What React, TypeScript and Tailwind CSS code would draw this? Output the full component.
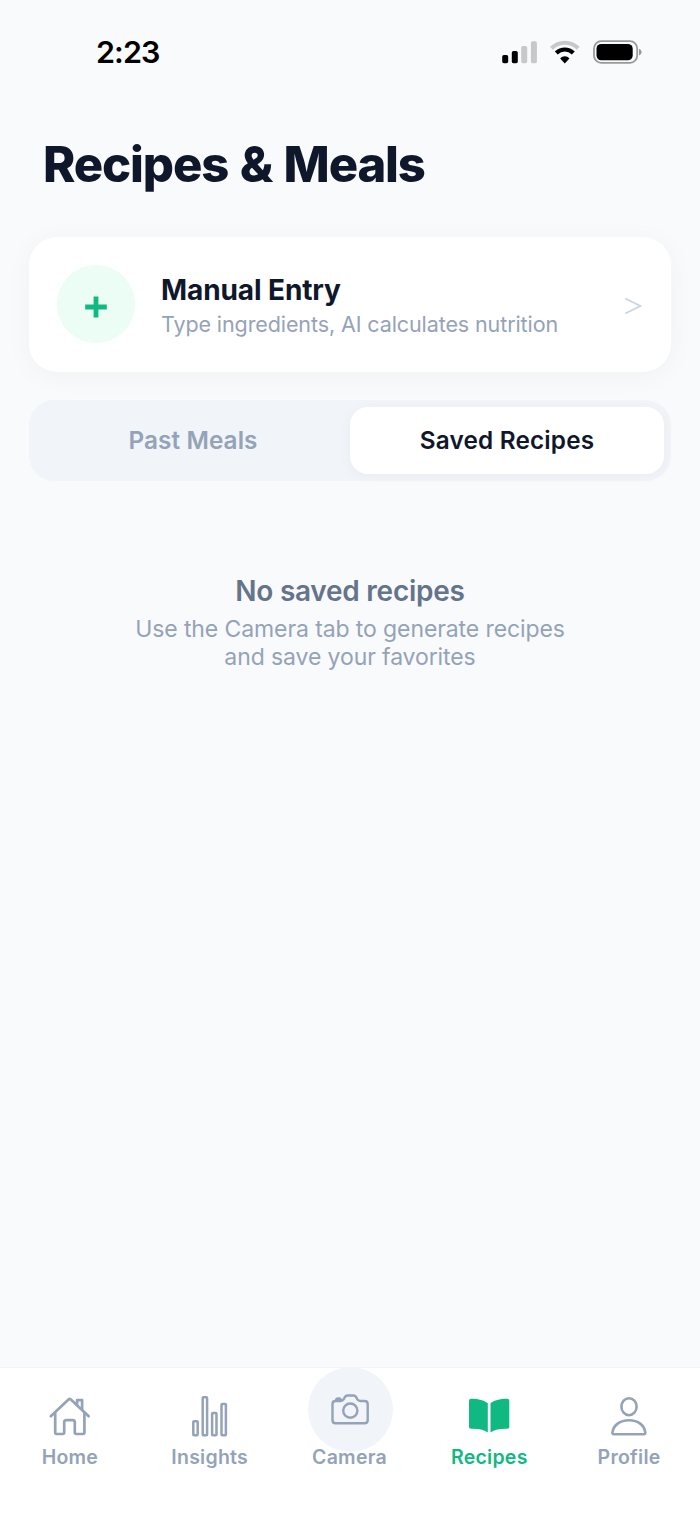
import type { ReactNode } from 'react'

const HomeIcon = () => (
  <svg width="48" height="48" viewBox="0 0 48 48" fill="none" stroke="currentColor" strokeWidth="2.7" strokeLinecap="round" strokeLinejoin="round">
    <path d="M4.8 25.2 22.8 8.3q.9-.8 1.8 0L42.7 25.2" />
    <path d="M9.2 22v19.6q0 1.4 1.4 1.4h6.2q1.4 0 1.4-1.4V31.4q0-2.2 2.2-2.2h6.2q2.2 0 2.2 2.2v10.2q0 1.4 1.4 1.4h6.8q1.4 0 1.4-1.4V22" />
    <path d="M31.1 13.8V9.1h5v9.4" />
  </svg>
)

const InsightsIcon = () => (
  <svg width="48" height="48" viewBox="0 0 48 48" fill="none" stroke="currentColor" strokeWidth="2.5">
    <rect x="7.3" y="30.3" width="4.4" height="14" rx="0.8" />
    <rect x="16.7" y="6.2" width="4.4" height="38.1" rx="0.8" />
    <rect x="26.1" y="22.1" width="4.4" height="22.2" rx="0.8" />
    <rect x="35.5" y="12.9" width="4.4" height="31.4" rx="0.8" />
  </svg>
)

const CameraIcon = () => (
  <svg width="48" height="48" viewBox="0 0 48 48" fill="none" stroke="currentColor" strokeWidth="2.4" strokeLinejoin="round">
    <path d="M9.5 15h5.2c1.5 0 2.2-.5 2.9-1.6l1.4-2.5c.6-1 1.3-1.4 2.4-1.4h6.2c1.1 0 1.8.4 2.4 1.4l1.4 2.5c.7 1.1 1.4 1.6 2.9 1.6h4.2q3.2 0 3.2 3.2v16q0 3-3.2 3h-29q-3 0-3-3v-16Q6.5 15 9.5 15Z" />
    <circle cx="24.3" cy="24.6" r="7.1" />
    <path d="M10 14.5q.2-2 2-2h1.100q1.600 0 1.900 2Z" fill="currentColor" />
  </svg>
)

const RecipesIcon = () => (
  <svg width="48" height="48" viewBox="0 0 48 48" fill="currentColor">
    <path d="M22.8 12.2C19 9.2 12.7 7.6 6 7.8Q4 7.9 4 9.9V35.7Q4 37.8 6 37.8C13 37.6 18.5 38.5 22.8 41.6Z" />
    <path d="M25.5 12.2C29.4 9.2 35.9 7.6 42.4 7.8Q44.3 7.9 44.3 9.9V35.7Q44.3 37.8 42.4 37.8C35.4 37.6 29.9 38.5 25.5 41.6Z" />
  </svg>
)

const ProfileIcon = () => (
  <svg width="48" height="48" viewBox="0 0 48 48" fill="none" stroke="currentColor" strokeWidth="2.6">
    <ellipse cx="24" cy="15.7" rx="7.6" ry="8.5" />
    <path d="M9 43.2q-1.7 0-1.6-1.6C8.2 34.2 15 29.2 24 29.2s15.5 5 16.3 12.4q.1 1.6-1.6 1.6Z" />
  </svg>
)

const StatusBar = () => (
  <div className="flex h-[104px] items-center justify-between pl-24 pr-[58px]">
    <span className="text-[30.5px] font-semibold leading-none tracking-[-0.9px] text-black">2:23</span>
    <div className="flex items-center">
      <svg width="36" height="24" viewBox="0 0 36 24">
        <rect x="0.2" y="15" width="6" height="8.2" rx="1.7" />
        <rect x="9.8" y="11" width="6" height="12.2" rx="1.7" />
        <rect x="19.2" y="6" width="6" height="17.2" rx="1.7" fill="#c7c8ca" />
        <rect x="28.9" y="1.2" width="6" height="22" rx="1.7" fill="#c7c8ca" />
      </svg>
      <svg className="ml-3" width="30" height="24" viewBox="0 0 30 24" fill="none" strokeWidth="4.2">
        <path d="M1.4 8.2C9.1.9 20.5.9 28.2 8.2" stroke="#c7c8ca" />
        <path d="M6.3 13c4.900-4.700 12.100-4.700 17 0" stroke="#000" />
        <path d="M14.8 23.6 10.2 18.6c2.500-3.100 6.700-3.100 9.200 0Z" fill="#000" />
      </svg>
      <svg className="ml-[13px]" width="49" height="24" viewBox="0 0 49 24">
        <rect x="1" y="1.2" width="43.2" height="21.6" rx="7.2" fill="none" stroke="#98999b" strokeWidth="1.8" />
        <rect x="3.5" y="3.9" width="36.2" height="16.4" rx="4.8" />
        <path d="M46 8.8q2.600 1 2.600 3.400T46 15.600Z" fill="#98999b" />
      </svg>
    </div>
  </div>
)

const NavItem = ({ label, icon, active = false }: { label: string; icon: ReactNode; active?: boolean }) => (
  <div className={active ? 'flex w-[139.8px] flex-col items-center text-[#10b981]' : 'flex w-[139.8px] flex-col items-center text-[#94a3b8]'}>
    <div className="mt-[23px] h-[54px]">{icon}</div>
    <span className="text-[19.5px] font-semibold leading-6 tracking-[0.25px]">{label}</span>
  </div>
)

const App = () => {
  return (
    <div className="flex h-[1518px] w-[700px] flex-col overflow-hidden bg-[#f9fafc] font-['Inter',sans-serif]">
      <StatusBar />

      <h1 className="ml-[43px] mt-[31px] h-[102px] text-[49px] font-extrabold leading-[60px] tracking-[-1.15px] text-[#0f172a] [word-spacing:2px]">
        Recipes &amp; Meals
      </h1>

      {/* Manual entry */}
      <div className="mx-[29px] flex h-[135px] items-center rounded-[28px] bg-white px-7 shadow-[0_4px_28px_rgba(0,0,0,0.04)]">
        <div className="mb-px flex size-[78px] items-center justify-center rounded-full bg-[#ecfdf5]">
          <svg className="mt-1.5" width="22" height="22" viewBox="0 0 22 22" fill="none" stroke="#10b981" strokeWidth="4.8">
            <path d="M11 .5v21M.2 11h21.6" />
          </svg>
        </div>
        <div className="ml-[26px] mt-[5px]">
          <div className="text-[28px] font-bold leading-[34px] tracking-[-0.1px] text-[#0f172a]">Manual Entry</div>
          <div className="text-[21.5px] leading-[34px] tracking-[-0.1px] text-[#94a3b8]">Type ingredients, AI calculates nutrition</div>
        </div>
        <svg className="ml-auto mt-[3px]" width="20" height="18" viewBox="0 0 20 18" fill="none" stroke="#cbd5e1" strokeWidth="1.8">
          <path d="M2.2 1.5 17.4 9 2.2 16.5" />
        </svg>
      </div>

      {/* Tabs */}
      <div className="mx-[29px] mt-7 flex h-[81px] rounded-[25px] bg-[#f1f4f9] p-[7px]">
        <div className="flex flex-1 items-center justify-center text-[24.3px] font-semibold tracking-[0.1px] text-[#94a3b8]">Past Meals</div>
        <div className="flex flex-1 items-center justify-center rounded-[18px] bg-white text-[24.3px] font-semibold tracking-[0.2px] text-[#0f172a] shadow-[0_2px_14px_rgba(0,0,0,0.04)]">
          Saved Recipes
        </div>
      </div>

      {/* Empty state */}
      <div className="mt-[93px] flex-1 text-center">
        <div className="text-[28px] font-semibold leading-[34px] tracking-[-0.25px] text-[#64748b]">No saved recipes</div>
        <p className="mt-2 text-[23px] leading-[27.5px] tracking-[-0.1px] text-[#94a3b8]">
          Use the Camera tab to generate recipes
          <br />
          and save your favorites
        </p>
      </div>

      <nav className="flex h-[151px] border-t border-[#f1f5f9] bg-white">
        <NavItem label="Home" icon={<HomeIcon />} />
        <NavItem label="Insights" icon={<InsightsIcon />} />
        <NavItem
          label="Camera"
          icon={
            <div className="-mt-6 ml-[1.5px] flex size-[85px] items-center justify-center rounded-full bg-[#f1f4f9]">
              <CameraIcon />
            </div>
          }
        />
        <NavItem label="Recipes" icon={<RecipesIcon />} active />
        <NavItem label="Profile" icon={<ProfileIcon />} />
      </nav>
    </div>
  )
}

export default App
